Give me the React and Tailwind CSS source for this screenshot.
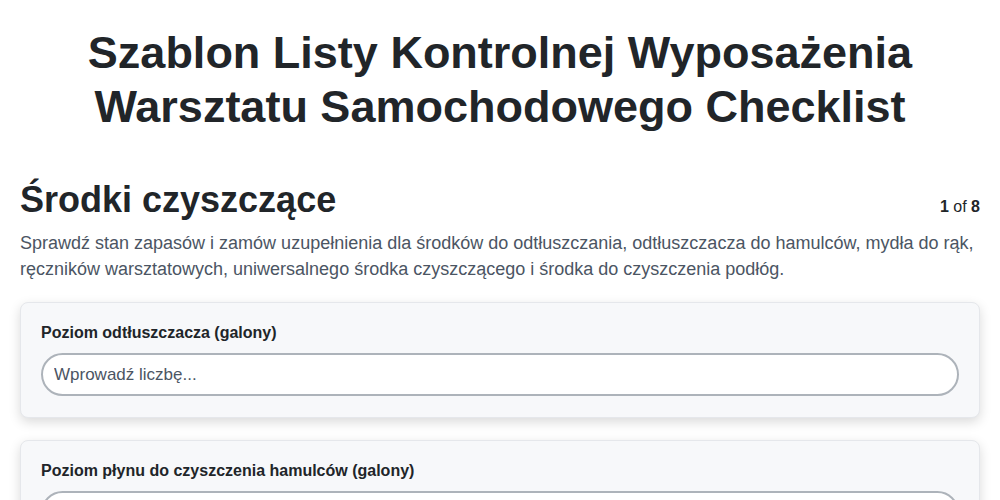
export default function App() {
  const font = { fontFamily: '"Liberation Sans", Arial, sans-serif' };
  const fields = [
    "Poziom odtłuszczacza (galony)",
    "Poziom płynu do czyszczenia hamulców (galony)",
  ];
  return (
    <div className="min-h-screen bg-white text-[#212529]" style={font}>
      <div className="mx-auto max-w-[1000px] px-5">
        <h1 className="pt-[26px] pb-[44px] text-center text-[45px] font-bold leading-[54px] text-[#212529]">
          Szablon Listy Kontrolnej Wyposażenia Warsztatu Samochodowego Checklist
        </h1>
        <div className="flex items-baseline justify-between">
          <h2 className="text-[36px] font-bold leading-[44px] text-[#212529]">Środki czyszczące</h2>
          <div className="text-[16px] text-[#212529]">
            <span className="font-bold">1</span> of <span className="font-bold">8</span>
          </div>
        </div>
        <p className="mt-[8px] text-[18px] leading-[26px] text-[#4b5563]">
          Sprawdź stan zapasów i zamów uzupełnienia dla środków do odtłuszczania, odtłuszczacza do hamulców, mydła do rąk, ręczników warsztatowych, uniwersalnego środka czyszczącego i środka do czyszczenia podłóg.
        </p>
        <div className="mt-[20px] flex flex-col gap-[22px]">
          {fields.map((f) => (
            <div key={f} className="rounded-lg border border-[#e5e7eb] bg-[#f7f8fa] px-5 pt-[20px] pb-[21px] shadow-[0_4px_12px_rgba(0,0,0,0.15)]">
              <label className="block text-[16px] font-bold leading-[20px] text-[#212529]">{f}</label>
              <input
                type="text"
                placeholder="Wprowadź liczbę..."
                className="mt-[10px] block h-[43px] w-full rounded-full border-2 border-[#adb3ba] bg-white px-[11px] text-[17px] text-[#212529] outline-none placeholder:text-[#4b5563]"
                style={font}
              />
            </div>
          ))}
        </div>
      </div>
    </div>
  );
}
